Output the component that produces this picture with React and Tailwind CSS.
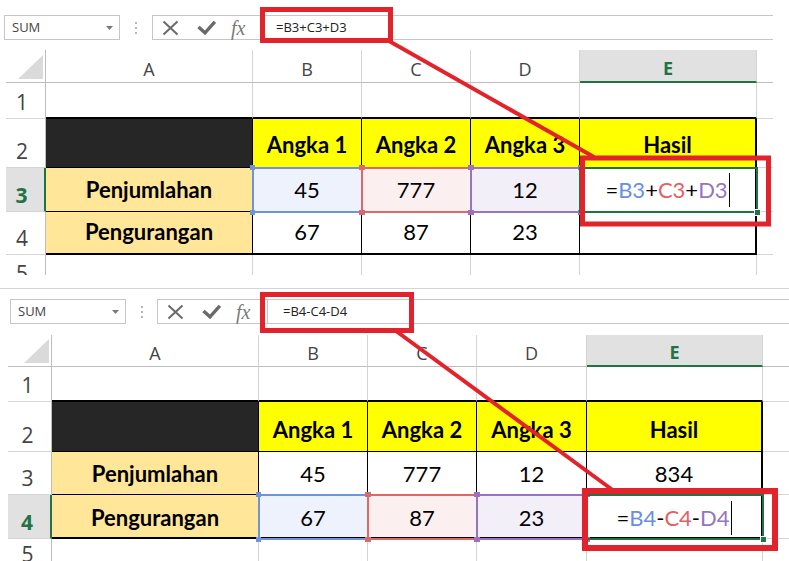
import React from 'react';

const OPEN = "[font-family:'Open_Sans',sans-serif]";
const LATO = "[font-family:Lato,sans-serif]";
const SERIF = "[font-family:'Liberation_Serif',serif]";

const SELS = {
  blue: { fill: 'bg-[#edf2fc]', border: 'border-[#6f93dc]', handle: 'bg-[#6f93dc]', text: 'text-[#6a8fe0]' },
  red: { fill: 'bg-[#fcefef]', border: 'border-[#e06767]', handle: 'bg-[#e06767]', text: 'text-[#e45f5f]' },
  purple: { fill: 'bg-[#f2eff9]', border: 'border-[#9574c6]', handle: 'bg-[#9574c6]', text: 'text-[#9474c4]' },
};
const SEL_ORDER = ['blue', 'red', 'purple'];

const TOP = {
  wrap: 'pt-[15px] w-[773px]',
  nameBox: 'ml-[4px] w-[116px]',
  dots: 'w-[32px]',
  fn: 'w-[110px]',
  inputPad: 'pl-[14px]',
  formula: '=B3+C3+D3',
  gridMt: 'mt-[10px]',
  ml: 'ml-[6px]',
  rhW: 'w-[40px]',
  rhPad: 'pr-[7px]',
  colW: ['w-[207px]', 'w-[109px]', 'w-[109px]', 'w-[109px]', 'w-[177px]'],
  fillW: 'w-[16px]',
  hdrH: 'h-[33px]',
  hdrPt: 'pt-[5px]',
  rowH: ['h-[36px]', 'h-[49px]', 'h-[44px]', 'h-[43px]', 'h-[20px]'],
  pb: ['', 'pb-[9px]', 'pb-[8px]', 'pb-[8px]'],
  activePb: 'pb-[4px]',
  r5Pt: 'pt-[6px]',
  activeRow: 3,
  refs: ['B3', 'C3', 'D3'],
  op: '+',
  e3: 'active',
  e4: '',
};

const BOTTOM = {
  wrap: 'mt-[13px] border-t border-[#d4d4d4] pt-[10px] w-[789px]',
  nameBox: 'ml-[10px] w-[116px]',
  dots: 'w-[31px]',
  fn: 'w-[111px]',
  inputPad: 'pl-[15px]',
  formula: '=B4-C4-D4',
  gridMt: 'mt-[11px]',
  ml: 'ml-[8px]',
  rhW: 'w-[44px]',
  rhPad: 'pr-[4px]',
  colW: ['w-[207px]', 'w-[109px]', 'w-[109px]', 'w-[110px]', 'w-[176px]'],
  fillW: 'w-[26px]',
  hdrH: 'h-[32px]',
  hdrPt: 'pt-[4px]',
  rowH: ['h-[35px]', 'h-[50px]', 'h-[43px]', 'h-[44px]', 'h-[22px]'],
  pb: ['', 'pb-[8px]', 'pb-[7px]', 'pb-[6px]'],
  activePb: 'pb-[2px]',
  r5Pt: 'pt-[3px]',
  activeRow: 4,
  refs: ['B4', 'C4', 'D4'],
  op: '-',
  e3: '834',
  e4: 'active',
};

function Dots() {
  return (
    <div className="flex flex-col gap-[3px]">
      <div className="w-[2px] h-[2px] bg-[#b5b5b5]" />
      <div className="w-[2px] h-[2px] bg-[#b5b5b5]" />
      <div className="w-[2px] h-[2px] bg-[#b5b5b5]" />
    </div>
  );
}

function FormulaBar({ c }) {
  return (
    <div className="flex h-[25px]">
      <div className={`${c.nameBox} shrink-0 h-[25px] border border-[#c6c6c6] flex items-center justify-between pl-[7px] pr-[6px]`}>
        <span className={`${OPEN} text-[13px] text-[#444]`}>SUM</span>
        <svg width="7" height="4" viewBox="0 0 7 4">
          <path d="M0 0H7L3.5 4Z" fill="#7a7a7a" />
        </svg>
      </div>
      <div className={`${c.dots} shrink-0 flex items-center justify-center`}>
        <Dots />
      </div>
      <div className={`${c.fn} shrink-0 h-[25px] border border-[#c6c6c6] flex items-center pl-[9px]`}>
        <svg width="17" height="16" viewBox="0 0 17 16">
          <path d="M1.5 1.5L15.5 14.5M15.5 1.5L1.5 14.5" stroke="#6a6a6a" strokeWidth="2" />
        </svg>
        <svg className="ml-[18px]" width="19" height="15" viewBox="0 0 19 15">
          <path d="M1.5 7L8 12.8L17.8 1.8" stroke="#6a6a6a" strokeWidth="3.4" fill="none" />
        </svg>
        <span className={`${SERIF} ml-[15px] italic text-[20px] leading-none text-[#7a7a7a]`}>fx</span>
      </div>
      <div className={`flex-1 h-[25px] border-y border-[#c6c6c6] flex items-center ${c.inputPad}`}>
        <span className={`${OPEN} text-[13px] text-[#222]`}>{c.formula}</span>
      </div>
    </div>
  );
}

function HeaderRow({ c }) {
  return (
    <div className={`flex ${c.hdrH}`}>
      <div className={`${c.rhW} shrink-0 relative border-r border-b border-[#bdbdbd]`}>
        <svg className="absolute right-[2px] bottom-[3px]" width="25" height="24" viewBox="0 0 25 24">
          <polygon points="25,0 25,24 0,24" fill="#dadada" />
        </svg>
      </div>
      {['A', 'B', 'C', 'D'].map((l, i) => (
        <div
          key={l}
          className={`${c.colW[i]} shrink-0 flex items-center justify-center ${c.hdrPt} border-r border-r-[#d4d4d4] border-b border-b-[#bdbdbd] ${OPEN} text-[18px] leading-[20px] text-[#444]`}
        >
          {l}
        </div>
      ))}
      <div
        className={`${c.colW[4]} shrink-0 flex items-center justify-center ${c.hdrPt} bg-[#e1e1e1] border-r border-r-[#d4d4d4] border-b-2 border-b-[#217346] ${OPEN} text-[18px] leading-[20px] font-bold text-[#217346]`}
      >
        E
      </div>
      <div className={`${c.fillW} shrink-0 border-b border-b-[#bdbdbd]`} />
    </div>
  );
}

function RowHeader({ n, c }) {
  const active = n === c.activeRow;
  const base = `${c.rhW} shrink-0 flex justify-center ${c.rhPad} ${OPEN} text-[21px] leading-[24px]`;
  if (n === 5) {
    return (
      <div className={`${base} items-start ${c.r5Pt} border-r border-r-[#bdbdbd] text-[#444]`}>5</div>
    );
  }
  return active ? (
    <div className={`${base} items-end pb-[4px] bg-[#e1e1e1] border-r-2 border-r-[#217346] border-b border-b-[#d4d4d4] font-bold text-[#217346]`}>
      {n}
    </div>
  ) : (
    <div className={`${base} items-end pb-[4px] border-r border-r-[#bdbdbd] border-b border-b-[#d4d4d4] text-[#444]`}>
      {n}
    </div>
  );
}

function SelBox({ color, bottom }) {
  const s = SELS[color];
  return (
    <div className={`absolute left-[-1px] top-[-1px] right-[-2px] ${bottom} border-2 ${s.border} z-10`}>
      <div className={`absolute left-[-4px] top-[-4px] w-[5px] h-[5px] ${s.handle}`} />
      <div className={`absolute right-[-4px] top-[-4px] w-[5px] h-[5px] ${s.handle}`} />
      <div className={`absolute left-[-4px] bottom-[-4px] w-[5px] h-[5px] ${s.handle}`} />
      <div className={`absolute right-[-4px] bottom-[-4px] w-[5px] h-[5px] ${s.handle}`} />
    </div>
  );
}

function ActiveBox({ bottom }) {
  return (
    <div className={`absolute left-[-1px] top-[-1px] right-[-3px] ${bottom} border-2 border-[#217346] z-20`}>
      <div className="absolute right-[-5px] bottom-[-5px] w-[7px] h-[7px] bg-[#217346] border border-white" />
    </div>
  );
}

function FormulaText({ c }) {
  return (
    <div className="inline-flex items-center">
      <span>=</span>
      <span className={SELS.blue.text}>{c.refs[0]}</span>
      <span>{c.op}</span>
      <span className={SELS.red.text}>{c.refs[1]}</span>
      <span>{c.op}</span>
      <span className={SELS.purple.text}>{c.refs[2]}</span>
      <span className="w-px h-[34px] bg-black ml-[1px]" />
    </div>
  );
}

const TXT = `${LATO} text-[22px] leading-[26px] text-black`;

function DataRow({ n, c }) {
  const W = c.colW;
  const h = c.rowH[n - 1];
  if (n === 1) {
    return (
      <div className={`flex ${h}`}>
        <RowHeader n={n} c={c} />
        {W.map((w, i) => (
          <div key={i} className={`${w} shrink-0 border-r border-r-[#d4d4d4] border-b-2 border-b-black`} />
        ))}
        <div className={`${c.fillW} shrink-0 border-b border-b-[#d4d4d4]`} />
      </div>
    );
  }
  if (n === 5) {
    return (
      <div className={`flex ${h} overflow-hidden`}>
        <RowHeader n={n} c={c} />
        {W.map((w, i) => (
          <div key={i} className={`${w} shrink-0 border-r border-r-[#d4d4d4]`} />
        ))}
      </div>
    );
  }
  const pb = c.pb[n - 1];
  if (n === 2) {
    return (
      <div className={`flex ${h}`}>
        <RowHeader n={n} c={c} />
        <div className={`${W[0]} shrink-0 bg-[#262626] border-r border-r-black border-b border-b-black`} />
        {['Angka 1', 'Angka 2', 'Angka 3'].map((t, i) => (
          <div
            key={t}
            className={`${W[i + 1]} shrink-0 bg-[#ffff00] border-r border-r-black border-b border-b-black flex items-end justify-center ${pb} ${TXT} font-bold`}
          >
            {t}
          </div>
        ))}
        <div className={`${W[4]} shrink-0 bg-[#ffff00] border-r-2 border-r-black border-b border-b-black flex items-end justify-center ${pb} ${TXT} font-bold`}>
          Hasil
        </div>
        <div className={`${c.fillW} shrink-0 border-b border-b-[#d4d4d4]`} />
      </div>
    );
  }
  const bb = n === 4 ? 'border-b-2' : 'border-b';
  const selBottom = n === 4 ? 'bottom-[-3px]' : 'bottom-[-2px]';
  const label = n === 3 ? 'Penjumlahan' : 'Pengurangan';
  const nums = n === 3 ? ['45', '777', '12'] : ['67', '87', '23'];
  const sel = n === c.activeRow;
  const e = n === 3 ? c.e3 : c.e4;
  return (
    <div className={`flex ${h}`}>
      <RowHeader n={n} c={c} />
      <div className={`${W[0]} shrink-0 bg-[#ffe699] border-r border-r-black ${bb} border-b-black flex items-end justify-center ${pb} ${TXT} font-bold`}>
        {label}
      </div>
      {nums.map((v, i) => (
        <div
          key={i}
          className={`${W[i + 1]} shrink-0 relative ${sel ? SELS[SEL_ORDER[i]].fill : ''} border-r border-r-black ${bb} border-b-black flex items-end justify-center ${pb} ${TXT}`}
        >
          {v}
          {sel && <SelBox color={SEL_ORDER[i]} bottom={selBottom} />}
        </div>
      ))}
      <div
        className={`${W[4]} shrink-0 relative border-r-2 border-r-black ${bb} border-b-black flex items-end justify-center ${e === 'active' ? c.activePb : pb} ${TXT}`}
      >
        {e === 'active' ? <FormulaText c={c} /> : e}
        {e === 'active' && <ActiveBox bottom={selBottom} />}
      </div>
      <div className={`${c.fillW} shrink-0 border-b border-b-[#d4d4d4]`} />
    </div>
  );
}

function Sheet({ c }) {
  return (
    <div className={c.wrap}>
      <FormulaBar c={c} />
      <div className={`${c.ml} ${c.gridMt}`}>
        <HeaderRow c={c} />
        {[1, 2, 3, 4, 5].map((n) => (
          <DataRow key={n} n={n} c={c} />
        ))}
      </div>
    </div>
  );
}

const RED = '#e3232b';

export default function App() {
  return (
    <div className="relative w-[789px] h-[561px] overflow-hidden bg-white">
      <Sheet c={TOP} />
      <Sheet c={BOTTOM} />
      <svg className="absolute left-0 top-0 z-30 pointer-events-none" width="789" height="561" viewBox="0 0 789 561">
        <rect x="262.5" y="9.5" width="128" height="31" fill="none" stroke={RED} strokeWidth="5" />
        <line x1="389" y1="41" x2="594" y2="157" stroke={RED} strokeWidth="4" />
        <rect x="582.5" y="158" width="186" height="66" fill="none" stroke={RED} strokeWidth="5" />
        <rect x="262.5" y="294.5" width="149" height="36" fill="none" stroke={RED} strokeWidth="5" />
        <line x1="396" y1="331" x2="614" y2="491" stroke={RED} strokeWidth="4" />
        <rect x="585" y="491" width="190" height="57" fill="none" stroke={RED} strokeWidth="6" />
      </svg>
    </div>
  );
}
